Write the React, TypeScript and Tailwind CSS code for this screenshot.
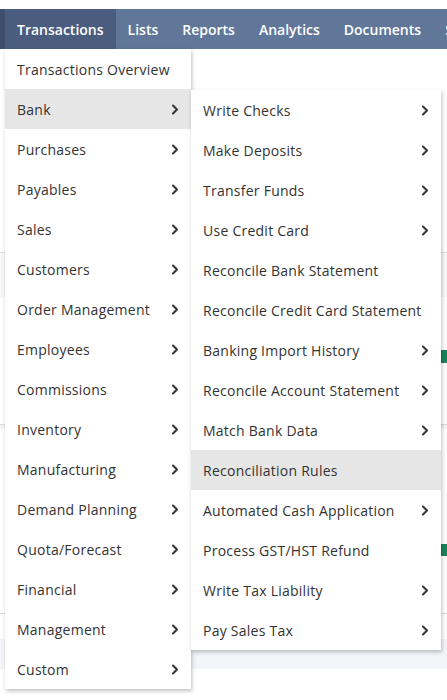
import React from 'react';

const tabs = ['Transactions', 'Lists', 'Reports', 'Analytics', 'Documents', 'Setup'];

const mainItems = [
	{ label: 'Transactions Overview', sub: false },
	{ label: 'Bank', sub: true },
	{ label: 'Purchases', sub: true },
	{ label: 'Payables', sub: true },
	{ label: 'Sales', sub: true },
	{ label: 'Customers', sub: true },
	{ label: 'Order Management', sub: true },
	{ label: 'Employees', sub: true },
	{ label: 'Commissions', sub: true },
	{ label: 'Inventory', sub: true },
	{ label: 'Manufacturing', sub: true },
	{ label: 'Demand Planning', sub: true },
	{ label: 'Quota/Forecast', sub: true },
	{ label: 'Financial', sub: true },
	{ label: 'Management', sub: true },
	{ label: 'Custom', sub: true },
];

const bankItems = [
	{ label: 'Write Checks', sub: true },
	{ label: 'Make Deposits', sub: true },
	{ label: 'Transfer Funds', sub: true },
	{ label: 'Use Credit Card', sub: true },
	{ label: 'Reconcile Bank Statement', sub: false },
	{ label: 'Reconcile Credit Card Statement', sub: false },
	{ label: 'Banking Import History', sub: true },
	{ label: 'Reconcile Account Statement', sub: true },
	{ label: 'Match Bank Data', sub: true },
	{ label: 'Reconciliation Rules', sub: false },
	{ label: 'Automated Cash Application', sub: true },
	{ label: 'Process GST/HST Refund', sub: false },
	{ label: 'Write Tax Liability', sub: true },
	{ label: 'Pay Sales Tax', sub: true },
];

function Chevron() {
	return (
		<svg width="8" height="11" viewBox="0 0 8 11" className="shrink-0">
			<polyline
				points="2,1.5 6,5.5 2,9.5"
				fill="none"
				stroke="#333"
				strokeWidth="2"
				strokeLinecap="round"
				strokeLinejoin="round"
			/>
		</svg>
	);
}

function MenuRow({ label, sub, active }: { label: string; sub: boolean; active?: boolean }) {
	return (
		<div
			className={`flex h-10 items-center justify-between pl-3 pr-3 pt-px text-[14px] font-medium tracking-[0.25px] text-[#333] ${
				active ? 'bg-[#e6e6e6]' : 'bg-white'
			}`}
		>
			<span className="whitespace-nowrap">{label}</span>
			{sub && <Chevron />}
		</div>
	);
}

export default function App() {
	return (
		<div
			className="relative h-[700px] w-[447px] overflow-hidden bg-white"
			style={{ fontFamily: '"Open Sans", "Liberation Sans", sans-serif' }}
		>
			<div className="h-[9px] bg-white" />

			{/* top navigation */}
			<nav className="flex h-10 items-stretch overflow-hidden bg-[#607799] text-[14px] font-semibold text-white">
				<div className="w-[5px] shrink-0 bg-[#3f4e6b]" />
				{tabs.map((tab, i) => (
					<div
						key={tab}
						className={`flex shrink-0 items-center px-3 ${i === 0 ? 'bg-[#4b5d7e]' : ''}`}
					>
						{tab}
					</div>
				))}
			</nav>

			{/* page content behind the menus */}
			<div className="h-[204px] border-b border-[#dcdcdc] bg-white" />
			<div className="h-[44px] bg-[#f8f8f8]" />
			<div className="flex h-[66px] flex-col justify-end bg-white">
				<div className="flex justify-end">
					<div className="h-[13px] w-[6px] bg-[#17855a]" />
				</div>
			</div>
			<div className="h-[61px] bg-white" />
			<div className="h-[5px] border-t border-[#dcdcdc] bg-[#f3f3f3]" />
			<div className="flex h-[127px] flex-col justify-end bg-white">
				<div className="flex justify-end">
					<div className="h-[12px] w-[6px] bg-[#17855a]" />
				</div>
			</div>
			<div className="h-[58px] border-b border-[#dcdcdc] bg-white" />
			<div className="h-[25px] bg-white" />
			<div className="h-[30px] bg-[#f4f5f8]" />

			{/* Transactions dropdown */}
			<div className="absolute left-[5px] top-[49px] w-[186px] bg-white shadow-[1px_2px_4px_rgba(0,0,0,0.25)]">
				{mainItems.map(item => (
					<MenuRow key={item.label} label={item.label} sub={item.sub} active={item.label === 'Bank'} />
				))}
			</div>

			{/* Bank submenu */}
			<div className="absolute left-[191px] top-[90px] w-[250px] bg-white shadow-[1px_2px_4px_rgba(0,0,0,0.25)]">
				{bankItems.map(item => (
					<MenuRow
						key={item.label}
						label={item.label}
						sub={item.sub}
						active={item.label === 'Reconciliation Rules'}
					/>
				))}
			</div>
		</div>
	);
}
